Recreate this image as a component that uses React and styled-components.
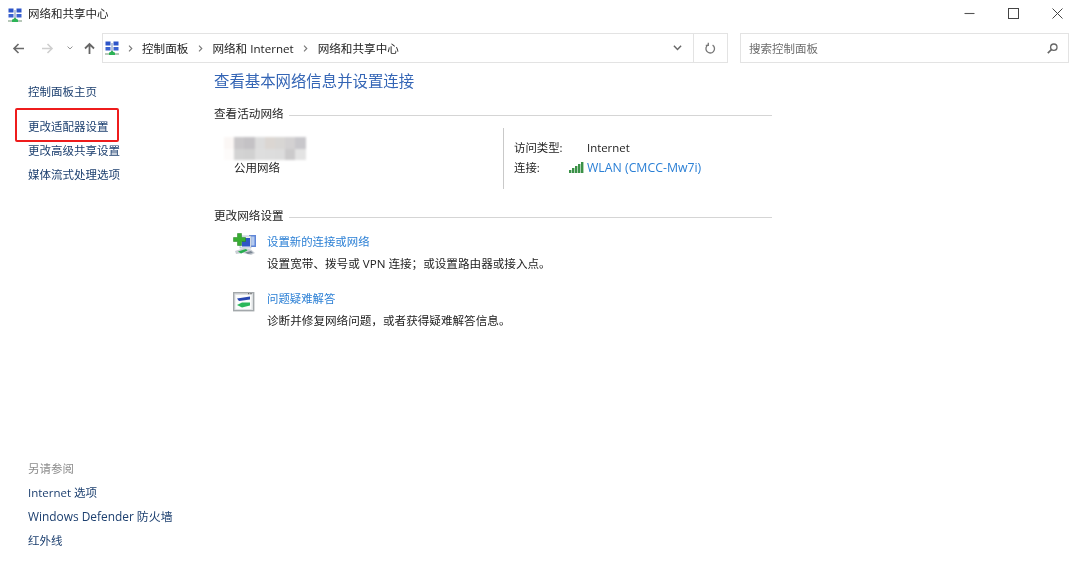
import React from "react";
import styled, { createGlobalStyle } from "styled-components";

const Global = createGlobalStyle`
  html, body { margin: 0; padding: 0; background: #fff; }
  body { font-family: "Open Sans", "Noto Sans CJK SC", sans-serif; font-size: 11.5px; color: #1e1e1e; }
  #root { width: 1080px; height: 568px; overflow: hidden; }
`;
const Win = styled.div`width:1080px;height:568px;display:flex;flex-direction:column;background:#fff;filter:blur(.3px);`;
const TitleBar = styled.div`height:30px;flex:none;display:flex;align-items:center;padding-left:8px;gap:6px;`;
const TitleText = styled.span`flex:1;font-size:11.5px;line-height:14px;color:#222;margin-top:-2px;`;
const WinControls = styled.div`display:flex;align-items:center;margin-top:-3px;padding-right:1px;`;
const WinBtn = styled.div`width:44px;height:24px;display:flex;align-items:center;justify-content:center;`;
const NavRow = styled.div`height:30px;flex:none;margin-top:3px;display:flex;align-items:center;padding:0 12px 0 0;`;
const NavBtns = styled.div`width:102px;flex:none;height:100%;display:flex;align-items:center;padding-left:12px;box-sizing:border-box;`;
const NavSlot = styled.div`width:${p => p.$w}px;flex:none;display:flex;align-items:center;`;
const AddressBar = styled.div`width:626px;height:30px;flex:none;box-sizing:border-box;border:1px solid #e3e3e3;display:flex;align-items:center;padding-left:2px;`;
const Crumbs = styled.div`flex:1;display:flex;align-items:center;color:#222;font-size:11.6px;`;
const CrumbSep = styled.span`width:${p => p.$w || 24}px;display:flex;justify-content:center;`;
const AddrDrop = styled.div`width:31px;height:100%;display:flex;align-items:center;justify-content:center;`;
const Refresh = styled.div`width:33px;height:100%;border-left:1px solid #e3e3e3;display:flex;align-items:center;justify-content:center;`;
const SearchBox = styled.div`width:329px;height:30px;margin-left:12px;flex:none;box-sizing:border-box;border:1px solid #e3e3e3;display:flex;align-items:center;justify-content:space-between;padding:0 10px 0 8px;color:#6d6d6d;font-size:11.5px;`;
const Main = styled.div`flex:1;display:flex;min-height:0;`;
const Sidebar = styled.div`width:214px;flex:none;box-sizing:border-box;padding:17px 0 15px 28px;display:flex;flex-direction:column;justify-content:space-between;`;
const SideGroup = styled.div`display:flex;flex-direction:column;`;
const SideLink = styled.div`position:relative;height:24px;line-height:24px;font-size:11.5px;color:#1c3f6f;white-space:nowrap;margin-top:${p => p.$mt || 0}px;`;
const WideLink = styled(SideLink)`font-size:11.9px;line-height:22px;`;
const SeeAlso = styled(SideLink)`color:#8c8c8c;`;
const RedBox = styled.div`position:absolute;left:-13px;top:-7px;width:104px;height:34px;box-sizing:border-box;border:2px solid #ee1c1c;border-radius:2px;`;
const Content = styled.div`width:558px;flex:none;padding-top:8px;`;
const Heading = styled.div`font-size:15.4px;line-height:22px;color:#3465b5;`;
const SectionHead = styled.div`display:flex;align-items:center;gap:5px;height:18px;margin-top:${p => p.$mt}px;color:#222;font-size:11.6px;`;
const Rule = styled.div`flex:1;height:1px;background:#d5d5d5;margin-top:4px;`;
const Active = styled.div`display:flex;height:61px;margin-top:6px;`;
const NetInfo = styled.div`width:289px;flex:none;padding:9px 0 0 10px;box-sizing:border-box;`;
const Mosaic = styled.div`display:grid;grid-template-columns:repeat(8,10.2px);grid-auto-rows:11.5px;width:82px;filter:blur(1.2px);`;
const Cell = styled.div`background:${p => p.$c};`;
const NetName = styled.div`font-size:11.5px;line-height:15px;color:#222;padding-left:10px;`;
const Details = styled.div`flex:1;border-left:1px solid #c9c9c9;padding:9px 0 0 10px;display:grid;grid-template-columns:73px 1fr;grid-auto-rows:20px;align-items:center;font-size:11.4px;color:#222;`;
const DetailLink = styled.span`display:flex;align-items:center;gap:2px;margin-left:-18px;color:#2a7fd5;font-size:12.3px;`;
const ActionRow = styled.div`display:flex;margin-top:${p => p.$mt}px;padding-left:19px;`;
const ActionIcon = styled.div`width:34px;flex:none;padding-top:${p => p.$pt || 0}px;`;
const ActionText = styled.div`display:flex;flex-direction:column;`;
const ActionLink = styled.div`height:22px;line-height:21px;color:#2a7fd5;font-size:11.4px;`;
const ActionDesc = styled.div`height:21px;line-height:21px;color:#222;font-size:11.6px;white-space:nowrap;`;

const NetIcon = ({ s = 14 }) => (
  <svg width={s} height={s} viewBox="0 0 14 14">
    <rect x="0.5" y="0.5" width="5" height="4" fill="#2d55c8" />
    <rect x="8.5" y="0.5" width="5" height="4" fill="#2d55c8" />
    <rect x="0.5" y="6" width="5" height="3.5" fill="#3a62d0" />
    <rect x="8.5" y="6" width="5" height="3.5" fill="#3a62d0" />
    <rect x="6" y="2" width="2" height="8" fill="#b9c6d8" />
    <path d="M3.5 13 L7 9.5 L10.5 13Z" fill="#22a84a" />
    <rect x="0" y="12" width="14" height="2" fill="#b7c8b9" />
    <rect x="4" y="11.5" width="6" height="2.5" fill="#2cb457" />
  </svg>
);
const Arrow = ({ dir = "left", c = "#6a6a6a", w = 1.6 }) => {
  const d = { left: "M12 6.5H2M6.5 2 2 6.5 6.5 11", right: "M1 6.5H11M6.5 2 11 6.5 6.5 11", up: "M6.5 12V2M2 6.5 6.5 2 11 6.5" }[dir];
  return <svg width="13" height="13" viewBox="0 0 13 13"><path d={d} fill="none" stroke={c} strokeWidth={w} /></svg>;
};
const Chevron = ({ c = "#777", w = 7, h = 4 }) => (
  <svg width={w} height={h + 1} viewBox="0 0 7 5"><path d="M.5 .7 3.5 3.7 6.5 .7" fill="none" stroke={c} strokeWidth="1.2" /></svg>
);
const Sep = () => (
  <svg width="5" height="7" viewBox="0 0 5 7"><path d="M1 .7 3.8 3.5 1 6.3" fill="none" stroke="#777" strokeWidth="1.1" /></svg>
);
const RefreshIcon = () => (
  <svg width="13" height="13" viewBox="0 0 13 13" fill="none" stroke="#777" strokeWidth="1.3">
    <path d="M8.6 3.1A4.3 4.3 0 1 1 4 3" />
    <path d="M4.3 .8V3.4H1.8" />
  </svg>
);
const SearchIcon = () => (
  <svg width="11" height="11" viewBox="0 0 11 11" fill="none" stroke="#666" strokeWidth="1.3">
    <circle cx="6.8" cy="4.2" r="3.2" />
    <path d="M4.5 6.5 .8 10.2" strokeWidth="1.7" />
  </svg>
);
const Signal = () => (
  <svg width="16" height="12" viewBox="0 0 16 12">
    {[[0, 9, 3], [3, 7, 5], [6, 5, 7], [9, 3, 9], [12, 1, 11]].map(([x, y, h]) => (
      <rect key={x} x={x} y={y} width="2.4" height={h} fill="#3b9147" />
    ))}
  </svg>
);
const SetupIcon = () => (
  <svg width="24" height="24" viewBox="0 0 24 24">
    <rect x="16" y="2" width="7" height="12" fill="#5f86d8" />
    <rect x="17.5" y="3.5" width="4" height="9" fill="#b4caf0" />
    <rect x="7" y="3" width="11" height="12" fill="#e8eef7" stroke="#9aa7bb" strokeWidth=".6" />
    <rect x="9" y="5" width="8" height="8.5" fill="#2f55c6" />
    <path d="M4.5 .5h4v4h4v4h-4v4h-4v-4H.5v-4h4z" fill="#38ad32" stroke="#1f7f1f" strokeWidth=".5" />
    <path d="M2 18 11 15 18 16.5 22 20 18 22 10 20 3 21z" fill="#c9ced4" />
    <path d="M5 18.5 13 16 14.5 17.5 8 20.5z" fill="#25ad4d" />
    <path d="M12 19.5 18 18 20 20 15 21z" fill="#7c8794" />
  </svg>
);
const TroubleIcon = () => (
  <svg width="22" height="20" viewBox="0 0 22 20">
    <rect x=".7" y=".7" width="20" height="18" fill="#dfe2e4" stroke="#a3a8ab" strokeWidth="1.4" />
    <rect x="2.5" y="3" width="16" height="14" fill="#fbfcfc" />
    <rect x="15" y="1" width="1.2" height="1.2" fill="#666" />
    <rect x="17.4" y="1" width="1.2" height="1.2" fill="#666" />
    <path d="M4 6.5 17 4.5V7.5L6 9z" fill="#2746b0" />
    <path d="M4 13 9 10.5 17 10.5V13.5L9 15.5z" fill="#2ab85a" />
  </svg>
);

const mosaic = [
  "#fbf7f5","#c9c7c9","#c4c2c5","#dcdcdc","#dbd6d2","#d8d6d4","#d3d1d2","#c8c7cb",
  "#fdfbfa","#d3d3d3","#d1d1d1","#dedede","#dddddd","#dcdcdc","#cbcacb","#e3e3e3",
];

export default function App() {
  return (
    <Win>
      <Global />
      <TitleBar>
        <NetIcon />
        <TitleText>网络和共享中心</TitleText>
        <WinControls>
          <WinBtn><svg width="11" height="11" viewBox="0 0 11 11"><path d="M.5 5.5H10.5" stroke="#555" strokeWidth="1.1" /></svg></WinBtn>
          <WinBtn><svg width="11" height="11" viewBox="0 0 11 11"><rect x=".5" y=".5" width="10" height="10" fill="none" stroke="#444" /></svg></WinBtn>
          <WinBtn><svg width="11" height="11" viewBox="0 0 11 11"><path d="M.5 .5 10.5 10.5M10.5 .5 .5 10.5" stroke="#444" strokeWidth="1" /></svg></WinBtn>
        </WinControls>
      </TitleBar>
      <NavRow>
        <NavBtns>
          <NavSlot $w={29}><Arrow dir="left" /></NavSlot>
          <NavSlot $w={26}><Arrow dir="right" c="#cfcfcf" /></NavSlot>
          <NavSlot $w={16}><Chevron c="#8a8a8a" w={6} h={3} /></NavSlot>
          <NavSlot $w={13}><Arrow dir="up" c="#666" w={1.8} /></NavSlot>
        </NavBtns>
        <AddressBar>
          <Crumbs>
            <NetIcon />
            <CrumbSep $w={23}><Sep /></CrumbSep>
            <span>控制面板</span>
            <CrumbSep><Sep /></CrumbSep>
            <span>网络和 Internet</span>
            <CrumbSep><Sep /></CrumbSep>
            <span>网络和共享中心</span>
          </Crumbs>
          <AddrDrop><Chevron c="#666" w={9} h={5} /></AddrDrop>
          <Refresh><RefreshIcon /></Refresh>
        </AddressBar>
        <SearchBox>
          <span>搜索控制面板</span>
          <SearchIcon />
        </SearchBox>
      </NavRow>
      <Main>
        <Sidebar>
          <SideGroup>
            <SideLink>控制面板主页</SideLink>
            <SideLink $mt={11}>更改适配器设置<RedBox /></SideLink>
            <SideLink>更改高级共享设置</SideLink>
            <SideLink>媒体流式处理选项</SideLink>
          </SideGroup>
          <SideGroup>
            <SeeAlso>另请参阅</SeeAlso>
            <SideLink>Internet 选项</SideLink>
            <WideLink>Windows Defender 防火墙</WideLink>
            <SideLink>红外线</SideLink>
          </SideGroup>
        </Sidebar>
        <Content>
          <Heading>查看基本网络信息并设置连接</Heading>
          <SectionHead $mt={11}>查看活动网络<Rule /></SectionHead>
          <Active>
            <NetInfo>
              <Mosaic>{mosaic.map((c, i) => <Cell key={i} $c={c} />)}</Mosaic>
              <NetName>公用网络</NetName>
            </NetInfo>
            <Details>
              <span>访问类型:</span>
              <span>Internet</span>
              <span>连接:</span>
              <DetailLink><Signal />WLAN (CMCC-Mw7i)</DetailLink>
            </Details>
          </Active>
          <SectionHead $mt={17}>更改网络设置<Rule /></SectionHead>
          <ActionRow $mt={7}>
            <ActionIcon $pt={2}><SetupIcon /></ActionIcon>
            <ActionText>
              <ActionLink>设置新的连接或网络</ActionLink>
              <ActionDesc>设置宽带、拨号或 VPN 连接；或设置路由器或接入点。</ActionDesc>
            </ActionText>
          </ActionRow>
          <ActionRow $mt={14}>
            <ActionIcon $pt={4}><TroubleIcon /></ActionIcon>
            <ActionText>
              <ActionLink>问题疑难解答</ActionLink>
              <ActionDesc>诊断并修复网络问题，或者获得疑难解答信息。</ActionDesc>
            </ActionText>
          </ActionRow>
        </Content>
      </Main>
    </Win>
  );
}
